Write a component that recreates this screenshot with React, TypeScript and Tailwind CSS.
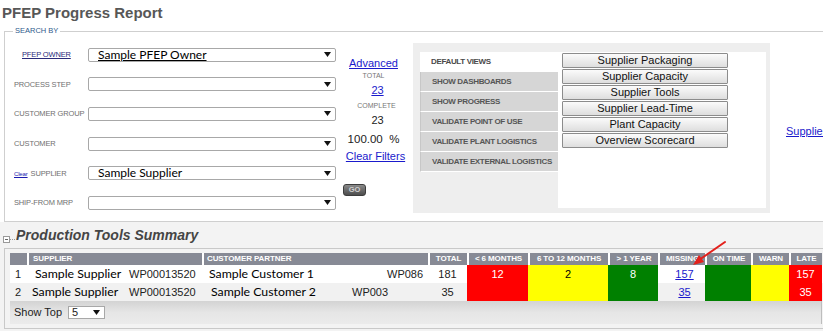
import React from 'react';

// Search form rows
const fields = [
  { label: 'PFEP OWNER', kind: 'link', value: 'Sample PFEP Owner' },
  { label: 'PROCESS STEP', kind: '', value: '' },
  { label: 'CUSTOMER GROUP', kind: '', value: '' },
  { label: 'CUSTOMER', kind: '', value: '' },
  { label: 'SUPPLIER', kind: 'clear', value: 'Sample Supplier' },
  { label: 'SHIP-FROM MRP', kind: '', value: '' },
];

const views = [
  'DEFAULT VIEWS',
  'SHOW DASHBOARDS',
  'SHOW PROGRESS',
  'VALIDATE POINT OF USE',
  'VALIDATE PLANT LOGISTICS',
  'VALIDATE EXTERNAL LOGISTICS',
];

const reports = [
  'Supplier Packaging',
  'Supplier Capacity',
  'Supplier Tools',
  'Supplier Lead-Time',
  'Plant Capacity',
  'Overview Scorecard',
];

const headers = [
  { label: 'TOTAL', w: 'w-[39px]' },
  { label: '< 6 MONTHS', w: 'w-[61px]' },
  { label: '6 TO 12 MONTHS', w: 'w-[80px]' },
  { label: '> 1 YEAR', w: 'w-[50px]' },
  { label: 'MISSING', w: 'w-[47px]' },
  { label: 'ON TIME', w: 'w-[46px]' },
  { label: 'WARN', w: 'w-[38px]' },
  { label: 'LATE', w: 'w-[33px]' },
];

const rows = [
  {
    n: '1',
    bg: 'bg-white',
    supCls: 'w-[102px] pl-[8px]',
    custCls: 'w-[185px] pl-[7px]',
    customer: 'Sample Customer 1',
    code: 'WP086',
    total: '181',
    m6: '12',
    m12: '2',
    y1: '8',
    missing: '157',
    late: '157',
  },
  {
    n: '2',
    bg: 'bg-[#f1f1f1]',
    supCls: 'w-[102px] pl-[5px]',
    custCls: 'w-[150px] pl-[9px]',
    customer: 'Sample Customer 2',
    code: 'WP003',
    total: '35',
    m6: '',
    m12: '',
    y1: '',
    missing: '35',
    late: '35',
  },
];

const Caret = () => (
  <svg width="7" height="5" viewBox="0 0 7 5" className="shrink-0">
    <polygon points="0,0 7,0 3.5,5" fill="#111" />
  </svg>
);

const Select = ({ value, underline }: { value: string; underline?: boolean }) => (
  <div className="w-[248px] h-[14px] border border-[#a8a8a8] rounded-[2px] bg-white flex items-center pr-[4px]">
    <span
      className={`pl-[9px] font-['Lato',sans-serif] text-[12px] leading-none text-black whitespace-nowrap ${
        underline ? 'underline underline-offset-[1px]' : ''
      }`}
    >
      {value}
    </span>
    <span className="ml-auto">
      <Caret />
    </span>
  </div>
);

export default function App() {
  return (
    <div className="w-[823px] h-[331px] overflow-hidden bg-white relative font-['Liberation_Sans',Arial,sans-serif]">
      <h1 className="pl-[2px] pt-[3px] text-[15px] leading-[20px] font-bold text-[#575757]">PFEP Progress Report</h1>

      {/* Search panel */}
      <fieldset className="ml-[4px] mt-[4px] w-[840px] h-[195px] border border-[#cfcfcf] p-0 m-0">
        <legend className="ml-[8px] px-[2px] text-[7.5px] leading-[8px] text-[#2f5b8c]">SEARCH BY</legend>
        <div className="flex">
          {/* labels + selects */}
          <div className="pl-[9px] pt-[5px] grid auto-rows-[29.6px]">
            {fields.map((f) => (
              <div key={f.label} className="flex items-center">
                <div className="w-[74px] text-[7.5px] text-[#707070] whitespace-nowrap tracking-[-0.15px]">
                  {f.kind === 'link' ? (
                    <span className="ml-[8px] text-[#2a2a7a] underline">{f.label}</span>
                  ) : f.kind === 'clear' ? (
                    <span>
                      <span className="text-[6px] text-[#1a1ab0] underline mr-[3px]">Clear</span>
                      {f.label}
                    </span>
                  ) : (
                    f.label
                  )}
                </div>
                <Select value={f.value} underline={f.kind === 'link'} />
              </div>
            ))}
          </div>

          {/* totals */}
          <div className="ml-[6px] w-[63px] flex flex-col items-center text-center">
            <a className="mt-[22px] text-[11px] leading-[13px] text-[#1a1acc] underline">Advanced</a>
            <span className="mt-[1px] text-[7px] leading-[9px] text-[#777]">TOTAL</span>
            <a className="mt-[4px] ml-[8px] text-[11px] leading-[13px] text-[#1a1acc] underline">23</a>
            <span className="mt-[4px] ml-[6px] text-[7px] leading-[9px] text-[#777]">COMPLETE</span>
            <span className="mt-[4px] ml-[8px] text-[11px] leading-[13px] text-[#222]">23</span>
            <span className="mt-[6px] text-[11.5px] leading-[13px] text-[#222] whitespace-pre">100.00  %</span>
            <a className="mt-[4px] ml-[4px] text-[11px] leading-[13px] text-[#1a1acc] underline whitespace-nowrap">
              Clear Filters
            </a>
            <button className="self-start mt-[21px] ml-[1px] w-[23px] h-[12px] rounded-[3px] bg-gradient-to-b from-[#8a8a8a] to-[#4d4d4d] text-[7.5px] font-bold text-[#d0d0d0] leading-none border border-[#3d3d3d]">
              GO
            </button>
          </div>

          {/* views tabs */}
          <div className="ml-[8px] mt-[8px] w-[357px] h-[170px] bg-[#eeeeee] pt-[9px] pl-[7px] pr-[4px] pb-[5px] flex">
            <div className="w-[138px] flex flex-col">
              {views.map((v, i) => (
                <div
                  key={v}
                  className={`h-[20px] border-b border-white flex items-center pl-[11px] text-[8px] font-bold tracking-[-0.35px] whitespace-nowrap ${
                    i === 0 ? 'bg-white text-[#4a4a4a]' : 'bg-[#d6d6d6] text-[#555] border-l border-l-[#c7c7c7]'
                  }`}
                >
                  {v}
                </div>
              ))}
            </div>
            <div className="flex-1 bg-white pl-[4px] pt-[1px] flex flex-col gap-[1px]">
              {reports.map((r) => (
                <button
                  key={r}
                  className="w-[166px] h-[15px] border border-[#8c8c8c] rounded-[1px] bg-gradient-to-b from-[#fbfbfb] to-[#dedede] text-[11px] leading-none text-[#111]"
                >
                  {r}
                </button>
              ))}
            </div>
          </div>

          <a className="ml-[16px] mt-[90px] self-start text-[11px] leading-[13px] text-[#1a1acc] underline whitespace-nowrap">
            Supplier
          </a>
        </div>
      </fieldset>

      {/* Production tools summary */}
      <div className="bg-[#f3f3f3] h-[109px]">
        <div className="h-[26px] flex items-center">
          <div className="ml-[3px] mt-[8px] w-[7px] h-[7px] border border-[#9a9a9a] bg-white flex items-center justify-center">
            <div className="w-[3px] h-[1px] bg-[#666]" />
          </div>
          <div className="mt-[8px] w-[5px] border-t border-dotted border-[#999]" />
          <h2 className="ml-[1px] text-[14px] font-bold italic text-[#454545] leading-[26px]">Production Tools Summary</h2>
        </div>

        <div className="ml-[4px] h-[81px] border border-[#c9c9c9] border-r-0 pt-[4px] pl-[5px]">
          {/* header */}
          <div className="flex h-[12px] text-[8px] font-bold text-white leading-[12px] tracking-[-0.1px]">
            <div className="w-[17px] bg-[#878a95]" />
            <div className="w-[175px] bg-[#878a95] border-l-2 border-white pl-[4px]">SUPPLIER</div>
            <div className="w-[226px] bg-[#878a95] border-l-2 border-white pl-[3px]">CUSTOMER PARTNER</div>
            {headers.map((h) => (
              <div key={h.label} className={`${h.w} bg-[#878a95] border-l-2 border-white text-center whitespace-nowrap overflow-hidden`}>
                {h.label}
              </div>
            ))}
          </div>

          {/* rows */}
          {rows.map((r) => (
            <div key={r.n} className={`flex h-[18px] items-center text-[11px] text-[#222] ${r.bg}`}>
              <div className="w-[17px] pl-[5px]">{r.n}</div>
              <div className="w-[175px] flex items-center">
                <span className={`${r.supCls} font-['Lato',sans-serif] text-[12.3px] text-black whitespace-nowrap`}>
                  Sample Supplier
                </span>
                <span>WP00013520</span>
              </div>
              <div className="w-[226px] flex items-center">
                <span className={`${r.custCls} font-['Lato',sans-serif] text-[12.3px] text-black whitespace-nowrap`}>
                  {r.customer}
                </span>
                <span>{r.code}</span>
              </div>
              <div className="w-[39px] text-center">{r.total}</div>
              <div className="w-[61px] h-full bg-[#ff0000] text-white flex items-center justify-center">{r.m6}</div>
              <div className="w-[80px] h-full bg-[#ffff00] text-black flex items-center justify-center">{r.m12}</div>
              <div className="w-[50px] h-full bg-[#008000] text-white flex items-center justify-center">{r.y1}</div>
              <div className="w-[47px] flex items-center justify-center">
                <a className="ml-[6px] text-[#1a1acc] underline">{r.missing}</a>
              </div>
              <div className="w-[46px] h-full bg-[#008000]" />
              <div className="w-[38px] h-full bg-[#ffff00]" />
              <div className="w-[33px] h-full bg-[#ff0000] text-white flex items-center justify-center">{r.late}</div>
            </div>
          ))}

          {/* footer */}
          <div className="w-[812px] h-[23px] bg-gradient-to-b from-[#d3d3d3] via-[#e6e6e6] to-[#ebebeb] border-r border-[#bdbdbd] flex items-center pl-[4px] text-[11px] text-[#222]">
            <span>Show Top</span>
            <div className="ml-[6px] w-[37px] h-[13px] border border-[#a8a8a8] bg-white flex items-center pl-[3px] pr-[4px]">
              <span className="leading-none">5</span>
              <span className="ml-auto">
                <Caret />
              </span>
            </div>
          </div>
        </div>
      </div>

      {/* red annotation arrow */}
      <svg className="absolute left-[688px] top-[238px]" width="42" height="32" viewBox="0 0 42 32">
        <line x1="37" y1="4" x2="11" y2="22" stroke="#e3211c" strokeWidth="2" strokeLinecap="round" />
        <polygon points="5,27 11,17 16,24" fill="#e3211c" />
      </svg>
    </div>
  );
}
